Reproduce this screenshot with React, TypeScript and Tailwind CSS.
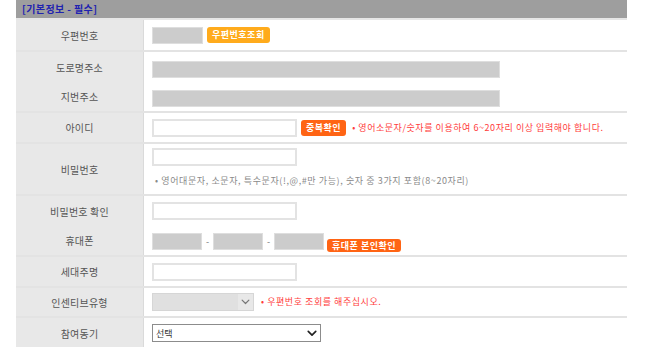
import React from 'react';

const Label: React.FC<{ children?: React.ReactNode }> = ({ children }) => (
    <div className="w-[128px] shrink-0 self-stretch bg-[#e8e8e8] border-r border-[#dadada] flex items-center justify-center text-[10px] text-[#555] tracking-[0.2px]">
        {children}
    </div>
);

const Row: React.FC<{ h: string; line?: boolean; children: React.ReactNode }> = ({ h, line = true, children }) => (
    <div className={`flex ${h} ${line ? 'border-b-2 border-[#e3e3e3]' : ''}`}>{children}</div>
);

const Gray: React.FC<{ w: string }> = ({ w }) => (
    <div className={`${w} h-[17px] bg-[#cccccc] border border-[#dedede]`} />
);

const Input: React.FC<{ w?: string }> = ({ w = 'w-[145px]' }) => (
    <div className={`${w} h-[18px] bg-white border-2 border-[#e3e3e3]`} />
);

const Btn: React.FC<{ color: string; children: React.ReactNode }> = ({ color, children }) => (
    <span className={`${color} h-[16px] px-[5px] rounded-[3px] text-white text-[9px] leading-[16px] font-bold tracking-[0.5px]`}>
        {children}
    </span>
);

const Chevron: React.FC<{ className?: string; stroke?: string; sw?: number }> = ({ className, stroke = '#666', sw = 1.6 }) => (
    <svg viewBox="0 0 12 8" className={className} fill="none" stroke={stroke} strokeWidth={sw} strokeLinecap="round" strokeLinejoin="round">
        <path d="M1.5 1.5 L6 6 L10.5 1.5" />
    </svg>
);

export default function App() {
    return (
        <div className="w-[646px] h-[347px] bg-white overflow-hidden font-['Noto_Sans_CJK_KR','Noto_Sans',sans-serif]">
            <div className="ml-[16px] w-[611px]">
                {/* header */}
                <div className="h-[20px] bg-[#9e9e9e] border-b-2 border-[#e6e6e6] flex items-center px-[6px]">
                    <span className="text-[10px] font-bold text-[#1f22b0] leading-none tracking-[0.4px]">[기본정보 - 필수]</span>
                </div>

                <Row h="h-[32px]">
                    <Label>우편번호</Label>
                    <div className="flex items-center pl-[8px] gap-[4px]">
                        <Gray w="w-[51px]" />
                        <Btn color="bg-[#ffab1c]">우편번호조회</Btn>
                    </div>
                </Row>

                <div className="border-b-2 border-[#e3e3e3]">
                    <Row h="h-[30px]" line={false}>
                        <Label>도로명주소</Label>
                        <div className="flex items-center pl-[8px] pt-[4px]">
                            <Gray w="w-[348px]" />
                        </div>
                    </Row>
                    <Row h="h-[29px]" line={false}>
                        <Label>지번주소</Label>
                        <div className="flex items-center pl-[8px] pt-[4px]">
                            <Gray w="w-[348px]" />
                        </div>
                    </Row>
                </div>

                <Row h="h-[31px]">
                    <Label>아이디</Label>
                    <div className="flex items-center pl-[8px] gap-[4px]">
                        <Input />
                        <Btn color="bg-[#ff6414]">중복확인</Btn>
                        <span className="ml-[2px] text-[9px] text-[#ff3c3c] tracking-[0.55px]">• 영어소문자/숫자를 이용하여 6~20자리 이상 입력해야 합니다.</span>
                    </div>
                </Row>

                <Row h="h-[52px]">
                    <Label>비밀번호</Label>
                    <div className="flex flex-col pl-[8px] pt-[4px]">
                        <Input />
                        <span className="mt-[9px] ml-[3px] text-[9px] text-[#8a8a8a] leading-[12px] tracking-[0.6px]">• 영어대문자, 소문자, 특수문자(!,@,#만 가능), 숫자 중 3가지 포함(8~20자리)</span>
                    </div>
                </Row>

                <div className="border-b-2 border-[#e3e3e3]">
                    <Row h="h-[30px]" line={false}>
                        <Label>비밀번호 확인</Label>
                        <div className="flex items-center pl-[8px]">
                            <Input />
                        </div>
                    </Row>
                    <Row h="h-[29px]" line={false}>
                        <Label>휴대폰</Label>
                        <div className="flex items-center pl-[8px] pt-[2px]">
                            <Gray w="w-[50px]" />
                            <span className="w-[11px] text-center text-[9px] text-[#777]">-</span>
                            <Gray w="w-[50px]" />
                            <span className="w-[11px] text-center text-[9px] text-[#777]">-</span>
                            <Gray w="w-[50px]" />
                            <span className="ml-[3px]"><Btn color="bg-[#ff6414]">휴대폰 본인확인</Btn></span>
                        </div>
                    </Row>
                </div>

                <Row h="h-[31px]">
                    <Label>세대주명</Label>
                    <div className="flex items-center pl-[8px]">
                        <Input />
                    </div>
                </Row>

                <Row h="h-[30px]">
                    <Label>인센티브유형</Label>
                    <div className="flex items-center pl-[8px] gap-[7px]">
                        <div className="w-[102px] h-[18px] flex border border-[#d6d6d6] bg-[#e0e0e0]">
                            <div className="flex-1" />
                            <div className="w-[15px] bg-[#e8e8e8] flex items-center justify-center">
                                <Chevron className="w-[9px] h-[6px]" stroke="#777" />
                            </div>
                        </div>
                        <span className="text-[9px] text-[#ff3c3c] tracking-[0.55px]">• 우편번호 조회를 해주십시오.</span>
                    </div>
                </Row>

                <Row h="h-[30px]" line={false}>
                    <Label>참여동기</Label>
                    <div className="flex items-center pl-[8px]">
                        <div className="w-[169px] h-[18px] flex items-center justify-between border-[1.5px] border-[#8c8c8c] bg-white px-[3px]">
                            <span className="text-[9px] text-[#333] leading-none">선택</span>
                            <Chevron className="w-[10px] h-[7px]" stroke="#222" sw={2} />
                        </div>
                    </div>
                </Row>
            </div>
        </div>
    );
}
